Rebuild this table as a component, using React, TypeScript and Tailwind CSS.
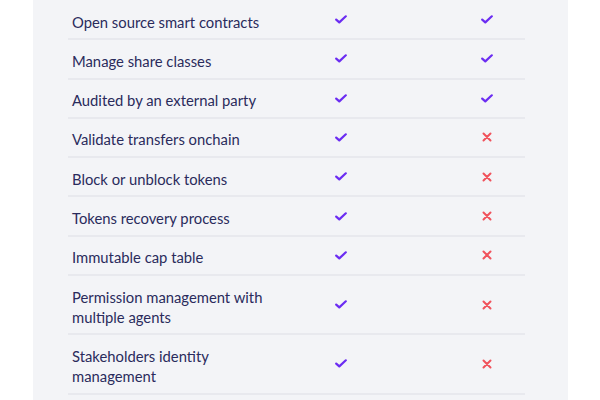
const rows: { label: string; a: boolean; b: boolean }[] = [
  { label: "Open source smart contracts", a: true, b: true },
  { label: "Manage share classes", a: true, b: true },
  { label: "Audited by an external party", a: true, b: true },
  { label: "Validate transfers onchain", a: true, b: false },
  { label: "Block or unblock tokens", a: true, b: false },
  { label: "Tokens recovery process", a: true, b: false },
  { label: "Immutable cap table", a: true, b: false },
  { label: "Permission management with multiple agents", a: true, b: false },
  { label: "Stakeholders identity management", a: true, b: false },
];

function Check() {
  return (
    <svg width="12" height="9" viewBox="0 0 12 9" fill="none">
      <path
        d="M1.2 4.6 L4.3 7.4 L10.8 1.3"
        stroke="#6b2cf2"
        strokeWidth="2.2"
        strokeLinecap="round"
        strokeLinejoin="round"
      />
    </svg>
  );
}

function Cross() {
  return (
    <svg width="10" height="10" viewBox="0 0 10 10" fill="none">
      <path
        d="M1.5 1.5 L8.5 8.5 M8.5 1.5 L1.5 8.5"
        stroke="#f0525c"
        strokeWidth="2"
        strokeLinecap="round"
      />
    </svg>
  );
}

export default function App() {
  return (
    <div className="w-[600px] h-[400px] bg-white overflow-hidden font-['Lato','Liberation_Sans',sans-serif]">
      <div className="ml-[33px] w-[535px] h-full bg-[#f3f4f7] pl-[35px] pt-[1px]">
        <div className="w-[457px]">
          {rows.map((r) => (
            <div
              key={r.label}
              className="flex items-center py-[8.65px] border-b-2 border-[#e8e9ee]"
            >
              <div className="w-[250px] pl-1 pr-8 text-[14.8px] leading-[20px] text-[#2a2b5c] translate-y-[1.5px]">
                {r.label}
              </div>
              <div className="w-[46px] flex justify-center">
                <Check />
              </div>
              <div className="ml-[100px] w-[46px] flex justify-center">
                {r.b ? <Check /> : <Cross />}
              </div>
            </div>
          ))}
        </div>
      </div>
    </div>
  );
}
